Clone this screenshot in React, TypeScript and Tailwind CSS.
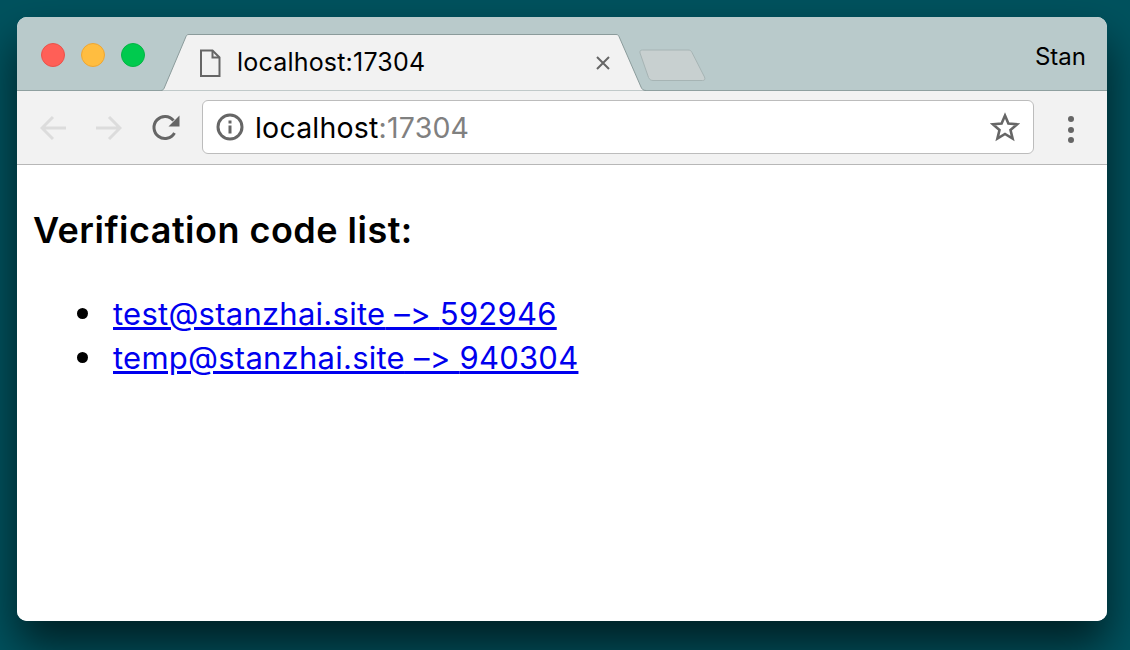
const links = [
  { email: 'test@stanzhai.site', code: '592946' },
  { email: 'temp@stanzhai.site', code: '940304' },
];

const App = () => {
  return (
    <div className="w-[1130px] h-[650px] overflow-hidden bg-[#00525e] pt-[17px] pl-[17px] font-['Inter',sans-serif]">
      <div className="w-[1090px] h-[604px] rounded-[10px] overflow-hidden bg-white shadow-[0_24px_44px_rgba(0,0,0,0.62)] flex flex-col">
        {/* Title bar */}
        <div className="h-[74px] bg-[#b9cacb] border-b border-[#8fa0a0] flex shrink-0">
          <div className="flex items-start gap-4 pl-6 pt-[26px] w-[144px] shrink-0">
            <span className="w-6 h-6 rounded-full bg-[#ff5f57] border border-[#e9524b]" />
            <span className="w-6 h-6 rounded-full bg-[#ffbd40] border border-[#eda634]" />
            <span className="w-6 h-6 rounded-full bg-[#00ca4e] border border-[#04b544]" />
          </div>

          {/* Active tab */}
          <div className="relative w-[486px] h-[57px] mt-[17px] shrink-0 flex items-center pl-[38px]">
            <svg className="absolute inset-0" width="486" height="57" viewBox="0 0 486 57" fill="none">
              <path d="M0 56.5 C1.5 56.5 2.5 55.5 3 54.5 L25 2.5 C25.6 1 26.5 .5 28 .5 H455 C456.5 .5 457.4 1 458 2.5 L480 53 C480.8 55 482 56.5 485 56.5" fill="#f2f2f2" stroke="#8b9b9b" />
            </svg>
            <svg className="relative shrink-0" width="22" height="28" viewBox="0 0 22 28" fill="none" stroke="#666" strokeWidth="2">
              <path d="M2 1.5 H13.5 L20.5 8.5 V27 H2 Z" />
              <path d="M13.5 1.5 V8.5 H20.5" />
            </svg>
            <span className="relative ml-4 text-[25px] leading-none text-black tracking-[0.2px]">localhost:17304</span>
            <svg className="absolute left-[434px] top-[21px]" width="16" height="16" viewBox="0 0 16 16" fill="none" stroke="#666" strokeWidth="2">
              <path d="M2 2 L14 14 M14 2 L2 14" />
            </svg>
          </div>

          {/* New tab button */}
          <svg className="mt-[32px] -ml-[8px] shrink-0" width="67" height="33" viewBox="0 0 67 33" fill="none">
            <path d="M1 4 C.5 2 1.5 1 3.5 1 H49 C51 1 52 1.5 53 3.5 L65.5 28 C66.5 30.5 65.5 31.5 63.5 31.5 H14 C12 31.5 10.5 30.5 9.5 28.5 Z" fill="#c8d0d0" stroke="#a6b4b4" />
          </svg>

          <span className="ml-auto mr-[21px] mt-[26px] text-[24px] leading-[28px] text-black">Stan</span>
        </div>

        {/* Toolbar */}
        <div className="h-[74px] bg-[#f2f2f2] border-b border-[#b7b7b7] flex items-start pt-[9px] shrink-0">
          <div className="w-[185px] pl-[23px] pt-[14px] flex items-center gap-[30px] shrink-0">
            <svg width="26" height="26" viewBox="0 0 26 26" fill="none" stroke="#dcdcdc" strokeWidth="3">
              <path d="M26 13 H3 M13 2 L2 13 L13 24" />
            </svg>
            <svg width="26" height="26" viewBox="0 0 26 26" fill="none" stroke="#dcdcdc" strokeWidth="3">
              <path d="M0 13 H23 M13 2 L24 13 L13 24" />
            </svg>
            <svg width="28" height="28" viewBox="0 0 28 28" fill="none">
              <path d="M22.5 19 A11 11 0 1 1 21.5 6.5" stroke="#666" strokeWidth="3" />
              <path d="M27.5 1.5 V12.5 H16.5 Z" fill="#666" />
            </svg>
          </div>

          {/* Omnibox */}
          <div className="w-[832px] h-[54px] bg-white border border-[#bcbcbc] rounded-[6px] flex items-center pl-[13px] pr-[13px] shrink-0">
            <svg width="28" height="28" viewBox="0 0 28 28" fill="none" className="shrink-0">
              <circle cx="14" cy="14" r="12" stroke="#666" strokeWidth="3" />
              <rect x="12.5" y="12.5" width="3" height="8" fill="#666" />
              <rect x="12.5" y="7.5" width="3" height="3" fill="#666" />
            </svg>
            <span className="ml-[11px] pt-[2px] text-[28.5px] leading-none text-black tracking-[0.2px]">
              localhost<span className="text-[#808080]">:17304</span>
            </span>
            <svg className="ml-auto shrink-0" width="30" height="30" viewBox="0 0 30 30" fill="none">
              <path d="M15 3.5 L18.4 11.6 L27.2 12.3 L20.5 18 L22.6 26.6 L15 22 L7.4 26.6 L9.5 18 L2.8 12.3 L11.6 11.6 Z" stroke="#666" strokeWidth="2.6" strokeLinejoin="miter" />
            </svg>
          </div>

          <div className="flex-1 flex flex-col items-center gap-[4.5px] pt-[16px]">
            <span className="w-[6px] h-[6px] rounded-full bg-[#666]" />
            <span className="w-[6px] h-[6px] rounded-full bg-[#666]" />
            <span className="w-[6px] h-[6px] rounded-full bg-[#666]" />
          </div>
        </div>

        {/* Page content */}
        <div className="flex-1 bg-white pl-4 pt-[43px] text-black">
          <h3 className="text-[36px] leading-[44px] font-semibold tracking-[0.48px]">Verification code list:</h3>
          <ul className="list-none pl-[80px] mt-[40px] text-[31px] leading-[44px] tracking-[0.25px]">
            {links.map(link => (
              <li key={link.email} className="relative">
                <span className="absolute -left-[36px] top-[16px] w-[11px] h-[11px] rounded-full bg-black" />
                <a href="#" className="text-[#0000ee] underline">
                  {link.email} –&gt; {link.code}
                </a>
              </li>
            ))}
          </ul>
        </div>
      </div>
    </div>
  );
};

export default App;
